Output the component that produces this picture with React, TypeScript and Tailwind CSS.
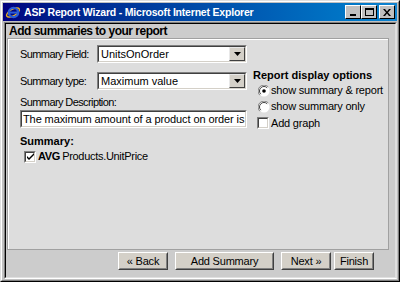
import React from "react"

const font = { fontFamily: '"Liberation Sans", Arial, sans-serif' }

function IeIcon() {
  return (
    <svg width="16" height="16" viewBox="0 0 16 16">
      <ellipse cx="8" cy="8.5" rx="7.2" ry="3.2" fill="none" stroke="#e8b020" strokeWidth="1.4" transform="rotate(-30 8 8.5)" />
      <circle cx="8.5" cy="8.5" r="4.6" fill="none" stroke="#2a5cd8" strokeWidth="2.4" />
      <rect x="4.5" y="7.6" width="8.5" height="2" fill="#2a5cd8" />
    </svg>
  )
}

function TitleButton({ children }: { children: React.ReactNode }) {
  return (
    <div className="w-[16px] h-[14px] bg-[#c0c0c0] border border-t-white border-l-white border-r-black border-b-black flex items-center justify-center">
      {children}
    </div>
  )
}

function DropArrow() {
  return (
    <div className="w-[16px] h-full bg-[#d4d0c8] border border-t-[#e8e8e8] border-l-[#e8e8e8] border-r-[#404040] border-b-[#404040] flex items-center justify-center">
      <svg width="7" height="4" viewBox="0 0 7 4">
        <path d="M0 0h7L3.5 4z" fill="#000" />
      </svg>
    </div>
  )
}

function Select({ value }: { value: string }) {
  return (
    <div className="w-[150px] h-[18px] bg-white border border-t-[#808080] border-l-[#808080] border-b-white border-r-white">
      <div className="h-full flex items-center border border-t-[#404040] border-l-[#404040] border-b-[#d4d0c8] border-r-[#d4d0c8]">
        <span className="flex-1 pl-[2px] text-[11px] leading-none text-black">{value}</span>
        <DropArrow />
      </div>
    </div>
  )
}

function Radio({ checked }: { checked?: boolean }) {
  return (
    <svg width="12" height="12" viewBox="0 0 12 12" className="shrink-0">
      <circle cx="6" cy="6" r="5.5" fill="#fff" />
      <path d="M10.2 1.8A5.5 5.5 0 0 0 1.8 10.2" fill="none" stroke="#808080" strokeWidth="1" />
      <path d="M9.2 2.8A4.3 4.3 0 0 0 2.8 9.2" fill="none" stroke="#404040" strokeWidth="1" />
      {checked && <circle cx="6" cy="6" r="1.8" fill="#000" />}
    </svg>
  )
}

function Checkbox({ checked }: { checked?: boolean }) {
  return (
    <div className="w-[12px] h-[12px] shrink-0 bg-white border border-t-[#808080] border-l-[#808080] border-b-white border-r-white">
      <div className="w-full h-full border border-t-[#404040] border-l-[#404040] border-b-[#d4d0c8] border-r-[#d4d0c8] flex items-center justify-center">
        {checked && (
          <svg width="7" height="7" viewBox="0 0 7 7">
            <path d="M0 3l2 2 5-5v2L2 7 0 5z" fill="#000" />
          </svg>
        )}
      </div>
    </div>
  )
}

function Button({ label, w }: { label: string; w: string }) {
  return (
    <div className={`${w} h-[18px] bg-[#d4d0c8] border border-t-white border-l-white border-r-[#404040] border-b-[#404040]`}>
      <div className="h-full flex items-center justify-center border border-t-[#d4d0c8] border-l-[#d4d0c8] border-r-[#808080] border-b-[#808080] text-[11px] tracking-[-0.2px] text-black">
        {label}
      </div>
    </div>
  )
}

export default function App() {
  return (
    <div style={font} className="w-[400px] h-[282px] bg-[#c0c0c0] border border-t-[#dfdfdf] border-l-[#dfdfdf] border-r-black border-b-black">
      <div className="h-full flex flex-col border border-t-white border-l-white border-r-[#808080] border-b-[#808080] p-[1px]">
        {/* Title bar */}
        <div className="h-[18px] shrink-0 flex items-center bg-gradient-to-r from-[#000080] to-[#1084d0] pl-[2px] pr-[2px]">
          <IeIcon />
          <span className="ml-[3px] text-white font-bold text-[10.5px] tracking-[-0.2px] leading-none">
            ASP Report Wizard - Microsoft Internet Explorer
          </span>
          <div className="ml-auto flex items-center">
            <TitleButton>
              <div className="w-[6px] h-[2px] bg-black mt-[6px] -ml-[1px]" />
            </TitleButton>
            <TitleButton>
              <div className="w-[9px] h-[8px] border border-black border-t-2" />
            </TitleButton>
            <div className="w-[2px]" />
            <TitleButton>
              <svg width="8" height="7" viewBox="0 0 8 7">
                <path d="M0 0h2l2 2.5L6 0h2L5 3.5 8 7H6L4 4.5 2 7H0l3-3.5z" fill="#000" />
              </svg>
            </TitleButton>
          </div>
        </div>

        {/* Client area */}
        <div className="flex-1 mt-[1px] ml-[1px] border border-t-[#808080] border-l-[#808080] border-b-white border-r-[#dfdfdf]">
          <div className="h-full flex flex-col bg-[#cccccc] border border-t-black border-l-black border-b-[#dfdfdf] border-r-[#dfdfdf] pl-[1px]">
            <div className="h-[14px] pl-[2px] pt-[1px] text-[12px] tracking-[-0.5px] font-bold leading-none text-black">
              Add summaries to your report
            </div>

            <div className="w-[382px] h-[212px] bg-[#dddddd] border border-[#a0a0a0] shadow-[inset_1px_1px_0_#ffffff] flex pl-[12px] pt-[6px]">
              {/* Left column */}
              <div className="w-[233px] shrink-0 flex flex-col text-[11px] text-black">
                <div className="flex items-center h-[18px]">
                  <span className="w-[77px] tracking-[-0.6px]">Summary Field:</span>
                  <Select value="UnitsOnOrder" />
                </div>
                <div className="flex items-center h-[18px] mt-[9px]">
                  <span className="w-[77px] tracking-[-0.6px]">Summary type:</span>
                  <Select value="Maximum value" />
                </div>
                <div className="mt-[6px] h-[13px] leading-[13px] tracking-[-0.6px]">Summary Description:</div>
                <div className="mt-[1px] w-[227px] h-[18px] bg-white border border-t-[#808080] border-l-[#808080] border-b-white border-r-white">
                  <div className="h-full flex items-center border border-t-[#404040] border-l-[#404040] border-b-[#d4d0c8] border-r-[#d4d0c8] pl-[1px] text-[11px] tracking-[-0.1px] leading-none whitespace-nowrap overflow-hidden">
                    The maximum amount of a product on order is
                    <span className="inline-block w-[1px] h-[13px] bg-black ml-[1px]" />
                  </div>
                </div>
                <div className="mt-[7px] h-[13px] leading-[13px] font-bold text-[11px]">Summary:</div>
                <div className="mt-[2px] flex items-center h-[13px] pl-[4px] gap-[2px] text-[11px] tracking-[-0.3px]">
                  <Checkbox checked />
                  <span className="font-bold">AVG</span>
                  <span>Products.UnitPrice</span>
                </div>
              </div>

              {/* Right column */}
              <div className="flex flex-col pt-[23px] text-[11px] text-black whitespace-nowrap">
                <div className="h-[14px] leading-[14px] font-bold text-[11px]">Report display options</div>
                <div className="mt-[1px] flex items-center gap-[1px] h-[15px] pl-[5px] tracking-[-0.2px]">
                  <Radio checked />
                  <span>show summary &amp; report</span>
                </div>
                <div className="mt-[1px] flex items-center gap-[1px] h-[15px] pl-[5px] tracking-[-0.2px]">
                  <Radio />
                  <span>show summary only</span>
                </div>
                <div className="mt-[1px] flex items-center gap-[2px] h-[16px] pl-[4px] tracking-[-0.2px]">
                  <Checkbox />
                  <span>Add graph</span>
                </div>
              </div>
            </div>

            <div className="flex justify-end gap-[3px] mt-[2px] pr-[21px]">
              <Button label="« Back" w="w-[50px]" />
              <div className="w-[1px]" />
              <Button label="Add Summary" w="w-[99px]" />
              <div className="w-[1px]" />
              <Button label="Next »" w="w-[50px]" />
              <Button label="Finish" w="w-[40px]" />
            </div>
          </div>
        </div>
      </div>
    </div>
  )
}
